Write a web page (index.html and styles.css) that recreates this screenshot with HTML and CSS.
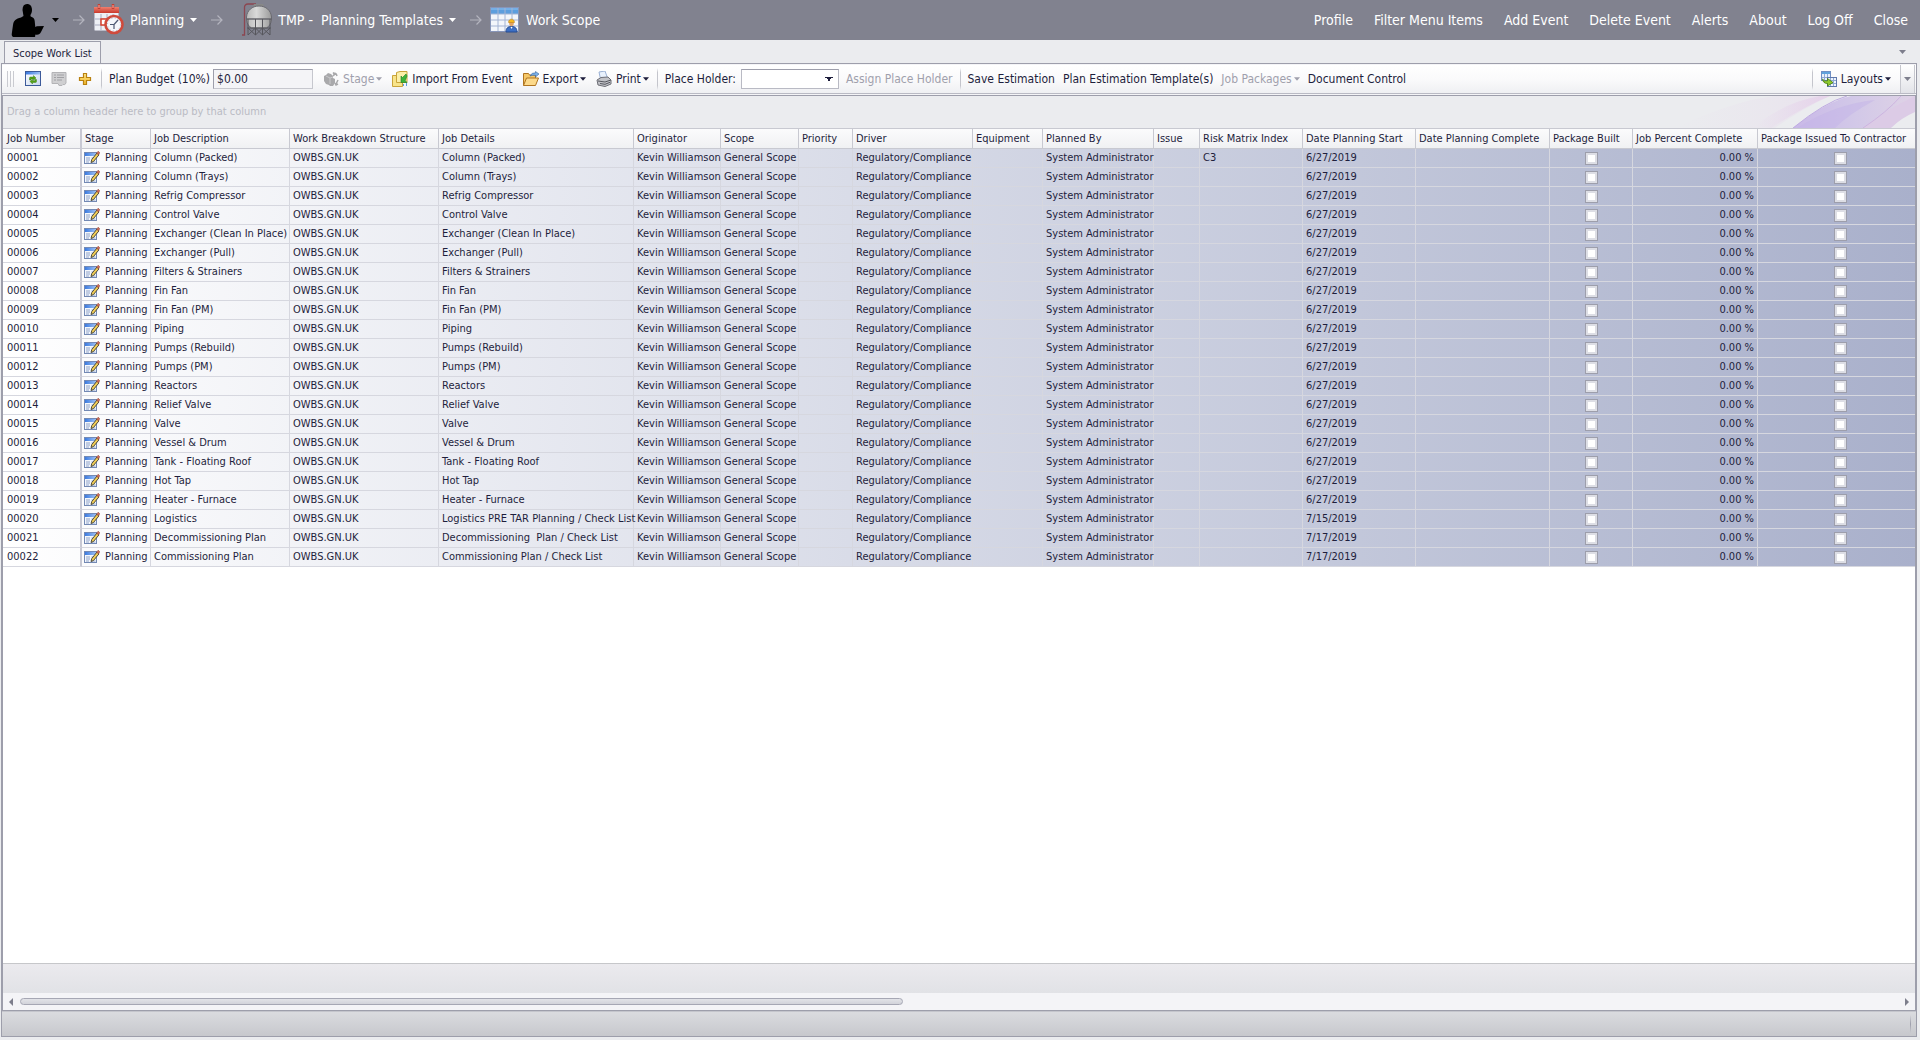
FILE: index.html
```html
<!DOCTYPE html>
<html lang="en">
<head>
<meta charset="utf-8">
<title>Work Scope</title>
<link rel="stylesheet" href="styles.css">
</head>
<body>
<svg class="sprite" aria-hidden="true">
  <defs>
    <linearGradient id="g-blue" x1="0" y1="0" x2="1" y2="0"><stop offset="0" stop-color="#3c7be0"/><stop offset="1" stop-color="#9cc0f5"/></linearGradient>
    <linearGradient id="g-page" x1="0" y1="0" x2="1" y2="1"><stop offset="0" stop-color="#ffffff"/><stop offset="1" stop-color="#c6d6ef"/></linearGradient>
    <linearGradient id="g-gold" x1="0" y1="0" x2="0" y2="1"><stop offset="0" stop-color="#ffe98a"/><stop offset="1" stop-color="#f0b52a"/></linearGradient>
    <linearGradient id="g-red" x1="0" y1="0" x2="0" y2="1"><stop offset="0" stop-color="#ef8070"/><stop offset="1" stop-color="#c8392c"/></linearGradient>
    <linearGradient id="g-tank" x1="0" y1="0" x2="1" y2="0"><stop offset="0" stop-color="#b9b9b9"/><stop offset=".4" stop-color="#d9d9d9"/><stop offset="1" stop-color="#9a9a9a"/></linearGradient>
  </defs>
  <symbol id="i-edit" viewBox="0 0 16 16">
    <rect x=".5" y="2.5" width="12" height="11" fill="#f4f7fc" stroke="#7389b4"/>
    <rect x="1" y="3" width="11" height="3" fill="url(#g-blue)"/>
    <path d="M2 8h4M2 10h4M2 12h3M7.500 8h2M7.500 12h4" stroke="#8ea2c9"/>
    <path d="M7 12.500l.8-3L13 3l2 1.800-5.500 6.700z" fill="#f3cf55" stroke="#4b4a3c"/>
    <path d="M12.600 3.200L14.200 1.200l1.600 1.600-1.500 2z" fill="#cc6a58" stroke="#934638" stroke-width=".6"/>
  </symbol>
  <symbol id="i-caret" viewBox="0 0 7 4"><path d="M0 0h7L3.500 4z" fill="currentColor"/></symbol>
  <symbol id="i-arrow" viewBox="0 0 12 10"><path d="M0 5h11M6.500.5L11 5 6.500 9.500" fill="none" stroke="#b3b4be" stroke-width="1.200"/></symbol>
</svg>

<header class="topbar">
  <nav class="crumbs" aria-label="Breadcrumb">
    <button class="crumb user" aria-label="User menu">
      <svg class="person" viewBox="0 0 34 34"><path d="M11.500 7C11.500 3 13 1 16 1s5 2 5 6c0 2-.6 3.800-1.600 5l.3 1.500c2.300.8 3.800 2 4 4.500l.6 6 1.500-.7 7.200-.4-3 6c-1 2-2 2.600-4 2.800H24l.4 1.300-1 1.500H3C1 33.500.500 32.500.8 30.500L2 22c.6-4.500 3-6.500 8-7.500l2.500-1.500z" fill="#000"/></svg>
      <svg class="caret"><use href="#i-caret"/></svg>
    </button>
    <svg class="sep-arrow"><use href="#i-arrow"/></svg>
    <button class="crumb planning">
      <svg class="cal" viewBox="0 0 32 32">
        <rect x="1.500" y="3.500" width="24" height="23" rx="1" fill="#eef0f5" stroke="#b9bac6"/>
        <path d="M1 3h25v6H1z" fill="url(#g-red)"/>
        <path d="M6 0v5M20 0v5" stroke="#c43d30" stroke-width="2.500"/><path d="M6 1v3M20 1v3" stroke="#f6b0a5"/>
        <path d="M2 15h23M2 21h23M8 10v16M14 10v16M20 10v16" stroke="#a9acc0"/>
        <path d="M8 15h6v6H8z" fill="#fff" stroke="#d8402e" stroke-width="1.500"/>
        <circle cx="21" cy="20.500" r="8.500" fill="#f4f6fa" stroke="#cf4a3c" stroke-width="2.600"/>
        <circle cx="21" cy="20.500" r="6.500" fill="none" stroke="#a9adc0" stroke-dasharray="1 2.400"/>
        <path d="M25 16l-4 4.500v4.500M21 20.500h-4" fill="none" stroke="#4d5872" stroke-width="1.200"/>
      </svg>
      <span>Planning</span>
      <svg class="caret"><use href="#i-caret"/></svg>
    </button>
    <svg class="sep-arrow"><use href="#i-arrow"/></svg>
    <button class="crumb tmp">
      <svg class="tank" viewBox="0 0 32 34">
        <path d="M1 32h2.500V4.500Q3.500 1 7 1h8" fill="none" stroke="#8c4650" stroke-width="1.300"/>
        <path d="M12 3h11l-1-2h-9z" fill="#888"/>
        <path d="M5.500 14C6 7.500 11 3 18 3s12 4.500 12.500 11v3c-.5 4-2.500 6.500-5 8H10.500C8 23.500 6 21 5.500 17z" fill="url(#g-tank)" stroke="#6a6a70"/>
        <path d="M5 16h26" stroke="#66666c" stroke-width="1.500"/>
        <path d="M7 16v16M14.500 16v16M21.500 16v16M29 16v16M7 25l7.500 7M14.500 25L7 32M14.500 25l7 7M21.500 25l-7 7M21.500 25l7.500 7M29 25l-7.500 7M6 25h24" fill="none" stroke="#56565c"/>
      </svg>
      <span>TMP -&nbsp; Planning Templates</span>
      <svg class="caret"><use href="#i-caret"/></svg>
    </button>
    <svg class="sep-arrow"><use href="#i-arrow"/></svg>
    <button class="crumb scope">
      <svg class="grid-ico" viewBox="0 0 30 26">
        <rect x=".5" y=".5" width="28" height="24" fill="#f3f6fb" stroke="#8795b8"/>
        <rect x="1" y="1" width="27" height="6" fill="#5c9ede"/>
        <path d="M1 2h27" stroke="#8fc1f0"/>
        <path d="M1 7h27M1 13h27M1 19h27M8 1v23M15 1v23M22 1v23" stroke="#a4b4d4"/>
        <path d="M16 25c0-4 2-5.500 5.500-5.500S27 21 27 25z" fill="#3c6fc4" stroke="#274c92"/>
        <path d="M20.500 20l1 2 1-2z" fill="#fff"/>
        <path d="M19.200 15v1.500c0 3.600 4.600 3.600 4.600 0V15z" fill="#e0a468"/>
        <path d="M18.500 15.500c0-4.500 6-4.500 6 0z" fill="#f5b820" stroke="#b57b10" stroke-width=".5"/>
      </svg>
      <span>Work Scope</span>
    </button>
  </nav>
  <nav class="menu" aria-label="Main menu">
    <a href="#">Profile</a><a href="#">Filter Menu Items</a><a href="#">Add Event</a><a href="#">Delete Event</a><a href="#">Alerts</a><a href="#">About</a><a href="#">Log Off</a><a href="#">Close</a>
  </nav>
</header>

<div class="tabs">
  <button class="tab">Scope Work List</button>
  <button class="tab-menu" aria-label="Tab list"><svg class="caret"><use href="#i-caret"/></svg></button>
</div>

<main class="frame">
  <div class="toolbar">
    <span class="grip"></span>
    <button class="tool" aria-label="Refresh"><svg class="ico" viewBox="0 0 16 16"><rect x=".5" y=".5" width="15" height="14" fill="url(#g-page)" stroke="#3c5a9a"/><path d="M1 1h14v2.500H1z" fill="url(#g-blue)"/><path d="M4.500 9V7q0-1 1-1h3V4.500L11 7 8.500 9.300V8H6v1zM11.500 8.500v2q0 1-1 1h-3V13L5 10.500 7.500 8.200v1.500H10V8.500z" fill="#55a417" stroke="#2f7405" stroke-width=".4"/></svg></button>
    <button class="tool" disabled aria-label="Edit record"><svg class="ico" viewBox="0 0 16 16"><path d="M1 1.500h14V12q-1 2.500-3 1.500l-1 1H8l-1-2H1z" fill="#cfcfd1" stroke="#b3b3b6"/><path d="M3 4h2M6 4h7M3 6.500h2M6 6.500h7M3 9h2M6 9h5" stroke="#a0a0a4"/></svg></button>
    <button class="tool" aria-label="Add"><svg class="ico" viewBox="0 0 16 16"><path d="M6.500 2.500h3v4h4v3h-4v4h-3v-4h-4v-3h4z" fill="url(#g-gold)" stroke="#b98110" stroke-width="1.200"/></svg></button>
    <span class="rule"></span>
    <label for="budget" class="lbl">Plan Budget (10%)</label>
    <input id="budget" class="field" type="text" value="$0.00">
    <button class="tool" disabled><svg class="ico" viewBox="0 0 16 16"><path d="M5 2l3 1 2 2v2l2 1v4l-2 3H7l-1-1-3-1-2-3V5l2-1z" fill="#a9a9ab"/><path d="M3 5l4 2v6M7 7l3-1" fill="none" stroke="#c9c9cb"/><path d="M10 3q3-2 4 2M15 9l-2 4M10 1.500l2 1.500-2 2M12 12l1 2 2-1" fill="none" stroke="#a9a9ab" stroke-width="1.500"/></svg>Stage<svg class="caret"><use href="#i-caret"/></svg></button>
    <button class="tool"><svg class="ico" viewBox="0 0 16 16"><path d="M.5 4.500h10v11H.5z" fill="#f8e48a" stroke="#c9a43a"/><path d="M4.500 1.500L8 .5h7v11H4.500z" fill="#fbefa8" stroke="#c9a43a"/><path d="M14 3l-3.500 3.500L9 5v6.500h6L13.200 9.500 15 5z" fill="#3db33a" stroke="#1d8225" stroke-width=".6"/><path d="M14.500 12v3M11.500 13v2" stroke="#5a9bdc"/></svg>Import From Event</button>
    <button class="tool"><svg class="ico" viewBox="0 0 16 16"><path d="M.5 14.500v-12h5l1 1.500h6v3" fill="#f6c868" stroke="#b07420"/><path d="M.5 14.500L3.500 7h12l-3 7.500z" fill="#fcd98a" stroke="#b07420"/><path d="M7 5q2-4 5.500-3V.5L16 3l-3.500 3V4.300Q9.500 3.800 7 5z" fill="#7db2ea" stroke="#34659f" stroke-width=".6"/></svg>Export<svg class="caret"><use href="#i-caret"/></svg></button>
    <button class="tool"><svg class="ico" viewBox="0 0 16 16"><path d="M3 1l6-1 2.500 7-7 1z" fill="#e9f1fc" stroke="#9ab0d4"/><path d="M1 9l4-2.500 7-.5 3 3v4l-6 2.500L2 14z" fill="#c2c3c8" stroke="#6d6e76"/><path d="M2 10l7 1 6-2M4 12.500l5 .8 5-2" fill="none" stroke="#55565e"/></svg>Print<svg class="caret"><use href="#i-caret"/></svg></button>
    <span class="rule"></span>
    <label for="holder" class="lbl">Place Holder:</label>
    <select id="holder" class="combo"><option></option></select>
    <button class="tool text-tool" disabled>Assign Place Holder</button>
    <span class="rule"></span>
    <button class="tool text-tool">Save Estimation</button>
    <button class="tool text-tool">Plan Estimation Template(s)</button>
    <button class="tool text-tool" disabled>Job Packages<svg class="caret"><use href="#i-caret"/></svg></button>
    <button class="tool text-tool">Document Control</button>
    <div class="right">
      <span class="rule"></span>
      <button class="tool layouts"><svg class="ico" viewBox="0 0 16 16"><rect x=".5" y=".5" width="9" height="9" fill="#e8f0fb" stroke="#6f8fc4"/><path d="M1 1h8v2H1z" fill="#5fa3dc"/><path d="M1 6.500h8M3.500 3v6M6.500 3v6" stroke="#8faad4"/><rect x="6.500" y="6.500" width="9" height="9" fill="#eef3fb" stroke="#5f78ac"/><path d="M7 9.500h8M7 12.500h8M9.500 7v8M12.500 7v8" stroke="#8faad4"/><path d="M1.500 8q1.500 3 5 1.800V7.500l5.500 4-5.500 3.500v-2.500Q2 12.500 1.500 8z" fill="#8fca2c" stroke="#457a0c" stroke-width=".8"/></svg>Layouts<svg class="caret"><use href="#i-caret"/></svg></button>
      <button class="overflow" aria-label="Toolbar options"><svg class="caret"><use href="#i-caret"/></svg></button>
    </div>
  </div>

  <section class="grid">
    <div class="group-panel">
      <span>Drag a column header here to group by that column</span>
      <svg class="swirl" viewBox="0 0 240 32" preserveAspectRatio="none" aria-hidden="true">
        <defs>
          <linearGradient id="s1" x1="0" y1="0" x2="1" y2="0"><stop offset="0" stop-color="#e6d6ec" stop-opacity="0"/><stop offset="1" stop-color="#e6d2ea"/></linearGradient>
          <linearGradient id="s2" x1="0" y1="0" x2="1" y2="0"><stop offset="0" stop-color="#c9b8e8"/><stop offset=".5" stop-color="#d2c8e8"/><stop offset="1" stop-color="#dfd3e6"/></linearGradient>
        </defs>
        <path d="M0 32Q60 4 100 0h55q-30 14-55 32z" fill="url(#s1)" opacity=".35"/>
        <path d="M80 30Q110 6 145 0h10Q130 10 96 32z" fill="url(#s1)"/>
        <path d="M118 32Q150 6 176 0h64v4q-16 12-30 28z" fill="url(#s2)"/>
        <path d="M118 32Q150 6 172 0" fill="none" stroke="#bfabe2"/>
        <path d="M122 32Q160 8 200 4q-26 14-40 28z" fill="#c4b3e8" opacity=".5"/>
        <path d="M188 32Q214 12 240 0v16q-14 6-24 16z" fill="#dccbe6"/>
        <path d="M188 32Q212 16 226 0" fill="none" stroke="#cdb4e0"/>
      </svg>
    </div>
    <table class="data">
      <colgroup>
        <col class="w-num"><col class="w-stage"><col class="w-desc"><col class="w-wbs"><col class="w-details"><col class="w-orig"><col class="w-scope"><col class="w-prio"><col class="w-driver"><col class="w-equip"><col class="w-planned"><col class="w-issue"><col class="w-risk"><col class="w-start"><col class="w-complete"><col class="w-built"><col class="w-percent"><col class="w-issued">
      </colgroup>
      <thead>
        <tr><th>Job Number</th><th>Stage</th><th>Job Description</th><th>Work Breakdown Structure</th><th>Job Details</th><th>Originator</th><th>Scope</th><th>Priority</th><th>Driver</th><th>Equipment</th><th>Planned By</th><th>Issue</th><th>Risk Matrix Index</th><th>Date Planning Start</th><th>Date Planning Complete</th><th>Package Built</th><th>Job Percent Complete</th><th>Package Issued To Contractor</th></tr>
      </thead>
      <tbody id="rows"></tbody>
    </table>
    <div class="grid-footer"></div>
    <div class="scrollbar">
      <span class="arrow left-arrow"></span>
      <span class="track"><span class="thumb"></span></span>
      <span class="arrow right-arrow"></span>
    </div>
  </section>
  <footer class="status"><span class="status-rule"></span></footer>
</main>
<script src="rows.js"></script>
</body>
</html>
```
FILE: styles.css
```css
* { box-sizing: border-box; }

body {
  margin: 0;
  min-height: 100vh;
  display: flex;
  flex-direction: column;
  background: #ebecef;
  color: #1e1e3c;
  font: 12px/16px "DejaVu Sans Condensed", Tahoma, sans-serif;
}

button, input, select { font: inherit; color: inherit; margin: 0; }
button { border: 0; background: none; padding: 0; display: flex; align-items: center; white-space: nowrap; }
.sprite { position: absolute; width: 0; height: 0; }
svg { flex: none; display: block; }
.caret { width: 7px; height: 4px; }

/* Top bar */
.topbar {
  height: 40px;
  display: flex;
  align-items: center;
  justify-content: space-between;
  padding: 0 12px 0 11px;
  background: #81828f;
  color: #fff;
  font-size: 14px;
}
.crumbs { display: flex; align-items: center; }
.crumb { height: 40px; }
.user { color: #000; gap: 6px; }
.person { width: 34px; height: 34px; }
.sep-arrow { width: 12px; height: 10px; margin: 0 8px 0 14px; }
.planning { gap: 5px; }
.cal { width: 32px; height: 32px; }
.crumb .caret { margin-left: 1px; }
.tmp { gap: 5px; margin-left: 10px; }
.tank { width: 32px; height: 34px; }
.scope { gap: 6px; }
.grid-ico { width: 30px; height: 26px; }
.menu { display: flex; gap: 21px; }
.menu a { color: #fff; text-decoration: none; white-space: nowrap; }

/* Tabs */
.tabs { height: 23px; display: flex; align-items: flex-end; justify-content: space-between; padding: 0 14px 0 4px; }
.tab {
  height: 22px;
  padding: 2px 8px 0;
  border: 1px solid #9d9eab;
  border-bottom: 0;
  background: #f0f0f3;
  font-size: 11px;
}
.tab-menu { height: 22px; color: #7d7e8c; }

/* Frame */
.frame {
  flex: 1;
  display: flex;
  flex-direction: column;
  margin: 0 3px 3px 1px;
  border: 1px solid #9d9eab;
}

/* Toolbar */
.toolbar {
  height: 31px;
  display: flex;
  align-items: center;
  border-top: 1px solid #f4f4f7;
  border-bottom: 1px solid #f4f4f7;
  background: linear-gradient(#fff, #fafafb 50%, #eeeff2);
  box-shadow: inset 0 -1px #b9bac4;
  padding: 0 1px 1px 5px;
}
.grip { width: 7px; height: 16px; background: repeating-linear-gradient(90deg, #c9cad0 0 1px, transparent 1px 3px); margin-right: 6px; }
.tool { height: 22px; gap: 4px; padding: 0 5px; }
.text-tool { padding: 0 4px; }
.tool .caret { width: 6px; height: 4px; margin-left: -2px; }
.tool:disabled { color: #a0a0ac; }
.ico { width: 16px; height: 16px; }
.rule { width: 1px; height: 22px; background: linear-gradient(transparent, #c4c5cc 20%, #c4c5cc 80%, transparent); margin: 0 3px; }
.lbl { white-space: nowrap; padding-left: 4px; }
.field {
  width: 100px;
  height: 20px;
  margin: 0 5px 0 3px;
  padding: 0 3px;
  border: 1px solid #c6c7ce;
  border-top-color: #9d9eab;
  border-left-color: #9d9eab;
  background: #f4f4f7;
}
.combo {
  width: 98px;
  height: 20px;
  margin: 0 3px 0 5px;
  border: 1px solid #b9bac4;
  border-top-color: #9d9eab;
  border-radius: 0;
  appearance: none;
  background:
    conic-gradient(from 315deg at 50% 100%, #1e1e3c 90deg, transparent 0) right 5px top 7px / 8px 4px no-repeat,
    #fff;
}
.right { margin-left: auto; display: flex; align-items: center; align-self: stretch; }
.layouts { margin-right: 4px; }
.overflow {
  width: 15px;
  align-self: stretch;
  justify-content: center;
  border-left: 1px solid #c6c7ce;
  border-right: 1px solid #c6c7ce;
  background: linear-gradient(#fff, #e2e3e8);
  color: #7d7e8c;
}

/* Grid */
.grid {
  flex: 1;
  display: flex;
  flex-direction: column;
  border: 1px solid #9d9eab;
  background: #fff;
}
.group-panel {
  height: 32px;
  display: flex;
  align-items: center;
  justify-content: space-between;
  padding-left: 4px;
  background: #ebecef;
  color: #babbc4;
  font-size: 11px;
}
.swirl { width: 240px; height: 32px; }

.data {
  width: 100%;
  table-layout: fixed;
  border-collapse: separate;
  border-spacing: 0;
  font-size: 11px;
  line-height: 18px;
}
.w-num { width: 79px; }
.w-stage { width: 69px; }
.w-desc { width: 139px; }
.w-wbs { width: 149px; }
.w-details { width: 195px; }
.w-orig { width: 87px; }
.w-scope { width: 78px; }
.w-prio { width: 54px; }
.w-driver { width: 120px; }
.w-equip { width: 70px; }
.w-planned { width: 111px; }
.w-issue { width: 46px; }
.w-risk { width: 103px; }
.w-start { width: 113px; }
.w-complete { width: 134px; }
.w-built { width: 83px; }
.w-percent { width: 125px; }
.w-issued { width: 157px; }

.data th, .data td {
  padding: 0 0 0 3px;
  border-right: 1px solid #d6d7df;
  border-bottom: 1px solid #d6d7df;
  text-align: left;
  font-weight: normal;
  white-space: nowrap;
}
.data th {
  height: 21px;
  border-top: 1px solid #c8c9d1;
  border-color: #c8c9d1;
  background: linear-gradient(#fbfbfc, #f0f1f3);
}
.data td { height: 19px; }
.data tr > :first-child { padding-left: 4px; border-right: 2px solid #c8c9d4; }
.data tr > :last-child { border-right: 0; }
.data tbody tr { background: linear-gradient(90deg, #fff, #a9b0cb); }
.data td.num { text-align: right; padding-right: 3px; }
.data td.check { padding: 0; }
.data td.check:last-child { padding-left: 8px; }
.stage-cell { display: flex; align-items: center; gap: 5px; }
.data td.stage-td { padding-left: 2px; }
.check input {
  appearance: none;
  display: block;
  width: 13px;
  height: 13px;
  margin: 0 auto;
  border: 1px solid #9d9eab;
  background: #fff;
  box-shadow: inset 0 0 0 2px #dddee5;
}

.grid-footer { height: 30px; margin-top: auto; border-top: 1px solid #c6c7ca; background: linear-gradient(#ebeaee, #e1e2e6); }
.scrollbar { height: 17px; display: flex; align-items: center; padding: 0 6px; background: #f4f4f7; }
.arrow { border: 4px solid transparent; }
.left-arrow { border-left-width: 0; border-right-color: #7d7e8c; }
.right-arrow { border-right-width: 0; border-left-color: #7d7e8c; }
.track { flex: 1; padding: 0 7px; display: flex; }
.thumb { width: 47%; height: 7px; border: 1px solid #a6a7b4; border-radius: 4px; background: linear-gradient(#e2e3e8, #d2d3da); }

.status {
  height: 25px;
  display: flex;
  align-items: center;
  justify-content: flex-end;
  padding-right: 5px;
  border-top: 1px solid #c4c5cc;
  background: linear-gradient(#dadbdf, #c7c8cd);
}
.status-rule { width: 1px; height: 18px; background: linear-gradient(transparent, #9d9eab, transparent); }
```
FILE: rows.js
```
const jobs = [
  ['Column (Packed)'], ['Column (Trays)'], ['Refrig Compressor'], ['Control Valve'],
  ['Exchanger (Clean In Place)'], ['Exchanger (Pull)'], ['Filters & Strainers'], ['Fin Fan'],
  ['Fin Fan (PM)'], ['Piping'], ['Pumps (Rebuild)'], ['Pumps (PM)'], ['Reactors'],
  ['Relief Valve'], ['Valve'], ['Vessel & Drum'], ['Tank - Floating Roof'], ['Hot Tap'],
  ['Heater - Furnace'],
  ['Logistics', 'Logistics PRE TAR Planning / Check List', '7/15/2019'],
  ['Decommissioning Plan', 'Decommissioning\u00a0 Plan / Check List', '7/17/2019'],
  ['Commissioning Plan', 'Commissioning Plan / Check List', '7/17/2019']
];
const body = document.getElementById('rows');

function cell(row, text, cls) {
  const td = row.insertCell();
  td.textContent = text;
  if (cls) td.className = cls;
  return td;
}

function check(row, label) {
  const td = cell(row, '', 'check');
  const box = document.createElement('input');
  box.type = 'checkbox';
  box.setAttribute('aria-label', label);
  td.append(box);
}

jobs.forEach(([name, details = name, date = '6/27/2019'], i) => {
  const row = body.insertRow();
  cell(row, String(i + 1).padStart(5, '0'));
  cell(row, '', 'stage-td').innerHTML =
    '<span class="stage-cell"><svg class="ico"><use href="#i-edit"/></svg>Planning</span>';
  cell(row, name);
  cell(row, 'OWBS.GN.UK');
  cell(row, details);
  cell(row, 'Kevin Williamson');
  cell(row, 'General Scope');
  cell(row, '');
  cell(row, 'Regulatory/Compliance');
  cell(row, '');
  cell(row, 'System Administrator');
  cell(row, '');
  cell(row, i === 0 ? 'C3' : '');
  cell(row, date);
  cell(row, '');
  check(row, 'Package Built');
  cell(row, '0.00 %', 'num');
  check(row, 'Package Issued To Contractor');
});
```
